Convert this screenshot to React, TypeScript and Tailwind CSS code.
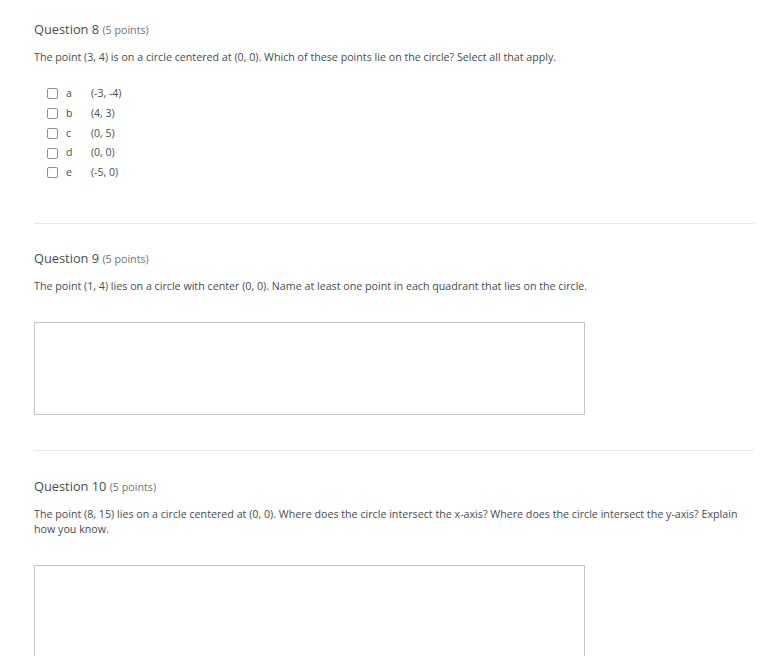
import React from 'react';

const font = { fontFamily: '"Open Sans", "Liberation Sans", sans-serif' };

function Heading({ n }: { n: number }) {
  return (
    <h2 className="text-[12.8px] leading-[16px] text-[#494c4e]">
      Question {n} <span className="text-[10.7px] text-[#6e7376]">(5 points)</span>
    </h2>
  );
}

function Prompt({ children }: { children: React.ReactNode }) {
  return <p className="text-[10.7px] leading-[15px] text-[#494c4e]">{children}</p>;
}

const options = [
  { k: 'a', v: '(-3, -4)' },
  { k: 'b', v: '(4, 3)' },
  { k: 'c', v: '(0, 5)' },
  { k: 'd', v: '(0, 0)' },
  { k: 'e', v: '(-5, 0)' },
];

export default function App() {
  return (
    <div className="bg-white w-[766px] h-[656px] overflow-hidden" style={font}>
      <div className="pl-[34px] pr-[12px] pt-[21px]">
        <section>
          <Heading n={8} />
          <div className="mt-[12px]">
            <Prompt>
              The point (3, 4) is on a circle centered at (0, 0). Which of these points lie on the circle? Select all that apply.
            </Prompt>
          </div>
          <ul className="mt-[19px] pl-[13px]">
            {options.map((o) => (
              <li key={o.k} className="flex items-center h-[19.75px] text-[10.5px] text-[#494c4e]">
                <span className="w-[11px] h-[11px] border border-[#8a8f92] rounded-[2px] bg-white" />
                <span className="ml-[8px] w-[25px]">{o.k}</span>
                <span>{o.v}</span>
              </li>
            ))}
          </ul>
        </section>

        <hr className="mt-[40px] border-0 border-t border-[#e6e6e6]" />

        <section className="mt-[26px]">
          <Heading n={9} />
          <div className="mt-[12px]">
            <Prompt>
              The point (1, 4) lies on a circle with center (0, 0). Name at least one point in each quadrant that lies on the circle.
            </Prompt>
          </div>
          <textarea className="block mt-[28px] w-[551px] h-[93px] border border-[#c4c4c4] resize-none outline-none" />
        </section>

        <hr className="mt-[35px] border-0 border-t border-[#e6e6e6]" />

        <section className="mt-[27px]">
          <Heading n={10} />
          <div className="mt-[12px]">
            <Prompt>
              The point (8, 15) lies on a circle centered at (0, 0). Where does the circle intersect the x-axis? Where does the circle intersect the y-axis? Explain how you know.
            </Prompt>
          </div>
          <textarea className="block mt-[28px] w-[551px] h-[120px] border border-[#c4c4c4] resize-none outline-none" />
        </section>
      </div>
    </div>
  );
}
